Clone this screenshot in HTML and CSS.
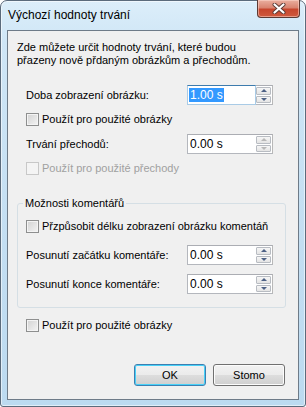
FILE: index.html
```html
<!DOCTYPE html>
<html lang="cs">
  <head>
    <meta charset="UTF-8" />
    <title>Výchozí hodnoty trvání</title>
    <link rel="stylesheet" href="styles.css">
  </head>
  <body>
    <div class="window">
      <div class="titlebar">
        <span class="title">Výchozí hodnoty trvání</span>
        <button class="close" aria-label="Zavřít">
          <svg width="14" height="11" viewBox="0 0 14 11">
            <path d="M2.5 1.5 L11.5 9.5 M11.5 1.5 L2.5 9.5" stroke="#5a3a34" stroke-width="4" stroke-linecap="round" fill="none" />
            <path d="M2.5 1.5 L11.5 9.5 M11.5 1.5 L2.5 9.5" stroke="#ffffff" stroke-width="2.2" stroke-linecap="round" fill="none" />
          </svg>
        </button>
      </div>

      <div class="client">
        <p class="intro">
          Zde můžete určit hodnoty trvání, které budou<br />
          přazeny nově přdaným obrázkům a přechodům.
        </p>

        <div class="row field first">
          <span class="label">Doba zobrazení obrázku:</span>
          <div class="spin focused">
            <span class="value"><span class="selected">1.00 s</span></span>
            <span class="arrows">
              <span class="arrow up"></span>
              <span class="arrow down"></span>
            </span>
          </div>
        </div>
        <label class="row check">
          <span class="box"></span>Použít pro použité obrázky
        </label>

        <div class="row field">
          <span class="label">Trvání přechodů:</span>
          <div class="spin">
            <span class="value">0.00 s</span>
            <span class="arrows dim">
              <span class="arrow up"></span>
              <span class="arrow down"></span>
            </span>
          </div>
        </div>
        <label class="row check disabled">
          <span class="box"></span>Použít pro použité přechody
        </label>

        <fieldset class="group">
          <legend>Možnosti komentářů</legend>
          <label class="row check">
            <span class="box"></span>Přzpůsobit délku zobrazení obrázku komentáň
          </label>
          <div class="row field">
            <span class="label">Posunutí začátku komentáře:</span>
            <div class="spin">
              <span class="value">0.00 s</span>
              <span class="arrows">
                <span class="arrow up"></span>
                <span class="arrow down"></span>
              </span>
            </div>
          </div>
          <div class="row field">
            <span class="label">Posunutí konce komentáře:</span>
            <div class="spin">
              <span class="value">0.00 s</span>
              <span class="arrows">
                <span class="arrow up"></span>
                <span class="arrow down"></span>
              </span>
            </div>
          </div>
        </fieldset>

        <label class="row check last">
          <span class="box"></span>Použít pro použité obrázky
        </label>

        <div class="buttons">
          <button class="btn default">OK</button>
          <button class="btn">Stomo</button>
        </div>
      </div>
    </div>
  </body>
</html>
```

FILE: styles.css
```css
* {
  box-sizing: border-box;
}

body {
  margin: 0;
  font-family: "Liberation Sans", Arial, sans-serif;
  font-size: 11px;
  color: #000;
  background: #fff;
}

.window {
  width: 306px;
  height: 407px;
  display: flex;
  flex-direction: column;
  padding: 0 6px 6px 6px;
  border: 1px solid #5b6b7c;
  border-radius: 7px 7px 3px 3px;
  background: linear-gradient(to bottom, #dceefa 0%, #cfe6f6 10%, #c3def2 60%, #bcdaf0 100%);
  box-shadow: inset 0 0 0 1px rgba(255, 255, 255, 0.55);
}

.titlebar {
  height: 29px;
  display: flex;
  justify-content: space-between;
  align-items: flex-start;
}

.title {
  font-size: 12px;
  line-height: 14px;
  margin: 7px 0 0 1px;
}

.close {
  width: 43px;
  height: 18px;
  margin: -1px -1px 0 0;
  padding: 0;
  border: 1px solid #5c3a33;
  border-top: none;
  border-radius: 0 0 4px 4px;
  background: linear-gradient(to bottom, #eaaf9f 0%, #d98470 45%, #c7462d 55%, #cf5a3e 100%);
  box-shadow: inset 0 0 0 1px rgba(255, 220, 210, 0.5);
  display: flex;
  align-items: center;
  justify-content: center;
}

.client {
  flex: 1;
  display: flex;
  flex-direction: column;
  background: #f0f0f0;
  border: 1px solid #6e7b88;
}

.intro {
  margin: 10px 0 0 9px;
  line-height: 13px;
}

.row {
  display: flex;
  align-items: center;
  padding: 0 25px 0 18px;
}

.field {
  height: 20px;
  margin-top: 6px;
}

.field.first {
  margin-top: 18px;
}

.label {
  flex: 1;
}

.spin {
  width: 86px;
  height: 20px;
  display: flex;
  background: #fff;
  border: 1px solid #b4b7bd;
  border-top-color: #abadb3;
  border-right-color: #b8b8b8;
}

.spin .value {
  flex: 1;
  padding: 2px 0 0 2px;
  line-height: 14px;
  font-size: 12px;
}

.spin.focused .value {
  border: 1px solid #a9cbe6;
  border-top-color: #3d7bad;
  margin: -1px 0 -1px -1px;
  padding: 2px 0 0 1px;
}

.selected {
  background: #3399ff;
  color: #fff;
  padding: 0 1px;
}

.arrows {
  width: 16px;
  display: flex;
  flex-direction: column;
  gap: 1px;
  padding: 1px 1px 1px 0;
  background: #fff;
}

.arrow {
  flex: 1;
  display: flex;
  align-items: center;
  justify-content: center;
  border: 1px solid #b8bcc2;
  border-radius: 1px;
  background: linear-gradient(to bottom, #f6f6f6, #e4e4e4);
}

.arrow::after {
  content: "";
  border-left: 3px solid transparent;
  border-right: 3px solid transparent;
}

.up::after {
  border-bottom: 3px solid #4d6185;
}

.down::after {
  border-top: 3px solid #4d6185;
}

.dim .up::after {
  border-bottom-color: #b8b8b8;
}

.dim .down::after {
  border-top-color: #b8b8b8;
}

.check {
  height: 17px;
  margin-top: 6px;
  line-height: 13px;
}

.box {
  width: 13px;
  height: 13px;
  margin-right: 3px;
  border: 1px solid #8e8f8f;
  background: linear-gradient(135deg, #d2d2d2, #f4f4f4);
  box-shadow: inset 0 0 0 1px #f4f4f4;
}

.check.disabled {
  color: #a0a0a0;
}

.check.disabled .box {
  border-color: #c8c8c8;
  background: #f4f4f4;
}

.group {
  margin: 20px 12px 0 9px;
  padding: 0 0 13px;
  border: 1px solid #d5dfe5;
  border-radius: 3px;
  min-width: 0;
}

.group legend {
  margin-left: 5px;
  padding: 0 2px;
  line-height: 13px;
}

.group .row {
  padding: 0 12px 0 8px;
}

.group .check {
  margin-top: 8px;
}

.group .field {
  margin-top: 10px;
}

.group .field + .field {
  margin-top: 9px;
}

.check.last {
  margin-top: 9px;
}

.buttons {
  display: flex;
  justify-content: flex-end;
  gap: 7px;
  margin-top: 30px;
  padding-right: 13px;
}

.btn {
  width: 72px;
  height: 22px;
  padding: 0;
  font-family: "Liberation Sans", Arial, sans-serif;
  font-size: 11px;
  color: #000;
  border: 1px solid #707070;
  border-radius: 3px;
  background: linear-gradient(to bottom, #f2f2f2 0%, #ebebeb 50%, #dddddd 51%, #cfcfcf 100%);
  box-shadow: inset 0 0 0 1px #fcfcfc;
}

.btn.default {
  border-color: #3c7fb1;
  box-shadow: inset 0 0 0 1px #48d1f8;
}
```
